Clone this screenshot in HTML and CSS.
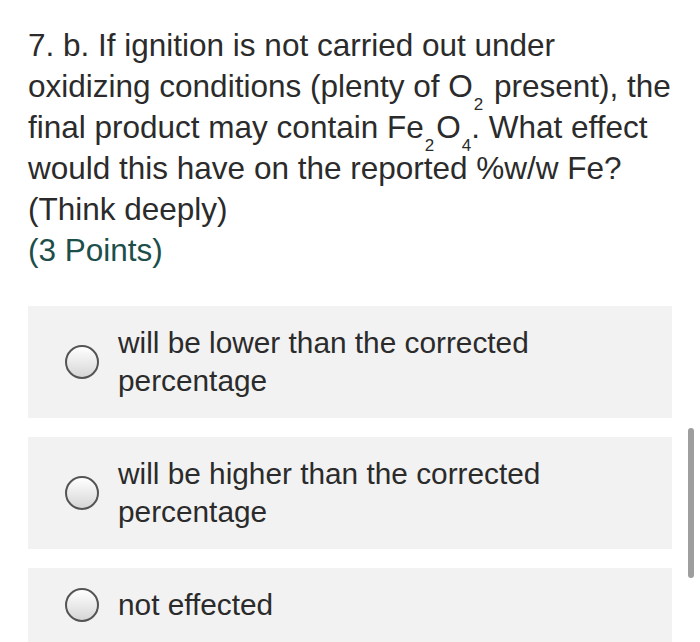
FILE: index.html
```html
<!DOCTYPE html>
<html>
<head>
<meta charset="utf-8">
<link rel="stylesheet" href="styles.css">
</head>
<body>
<div class="page">
  <div class="question">
    <span class="line">7. b. If ignition is not carried out under</span>
    <span class="line">oxidizing conditions (plenty of O<sub>2</sub> present), the</span>
    <span class="line">final product may contain Fe<sub>2</sub>O<sub class="tight">4</sub>. What effect</span>
    <span class="line">would this have on the reported %w/w Fe?</span>
    <span class="line">(Think deeply)</span>
    <span class="line points">(3 Points)</span>
  </div>
  <div class="options">
    <label class="option">
      <span class="radio"></span>
      <span class="opt-text">will be lower than the corrected<br>percentage</span>
    </label>
    <label class="option">
      <span class="radio"></span>
      <span class="opt-text">will be higher than the corrected<br>percentage</span>
    </label>
    <label class="option">
      <span class="radio"></span>
      <span class="opt-text">not effected</span>
    </label>
  </div>
</div>
<div class="scrollbar"></div>
</body>
</html>
```
FILE: styles.css
```css
html, body {
  margin: 0;
  padding: 0;
  background: #ffffff;
  overflow: hidden;
}
.page {
  padding: 25px 28px 0 28px;
  font-family: "Liberation Sans", Arial, sans-serif;
  color: #2b2b2b;
}
.question {
  font-size: 31.5px;
  line-height: 41px;
}
.line {
  display: block;
  white-space: nowrap;
}
.question sub {
  font-size: 17px;
  line-height: 0;
  vertical-align: -13px;
  margin: 0 2px 0 1px;
}
.question sub.tight {
  margin-right: 0;
}
.points {
  color: #1d4f4a;
}
.options {
  margin-top: 35px;
  display: flex;
  flex-direction: column;
  gap: 19px;
}
.option {
  display: flex;
  align-items: center;
  background: #f2f2f2;
  padding: 18px 20px 18px 37px;
  font-size: 29.8px;
  line-height: 38px;
}
.radio {
  flex: 0 0 auto;
  width: 30px;
  height: 30px;
  border: 2px solid #545454;
  border-radius: 50%;
  background: linear-gradient(#ffffff, #d6d6d6);
  margin-right: 19px;
}
.opt-text {
  display: block;
}
.scrollbar {
  position: fixed;
  left: 688px;
  top: 428px;
  width: 6px;
  height: 150px;
  border-radius: 3px;
  background: #9e9e9e;
}
```
